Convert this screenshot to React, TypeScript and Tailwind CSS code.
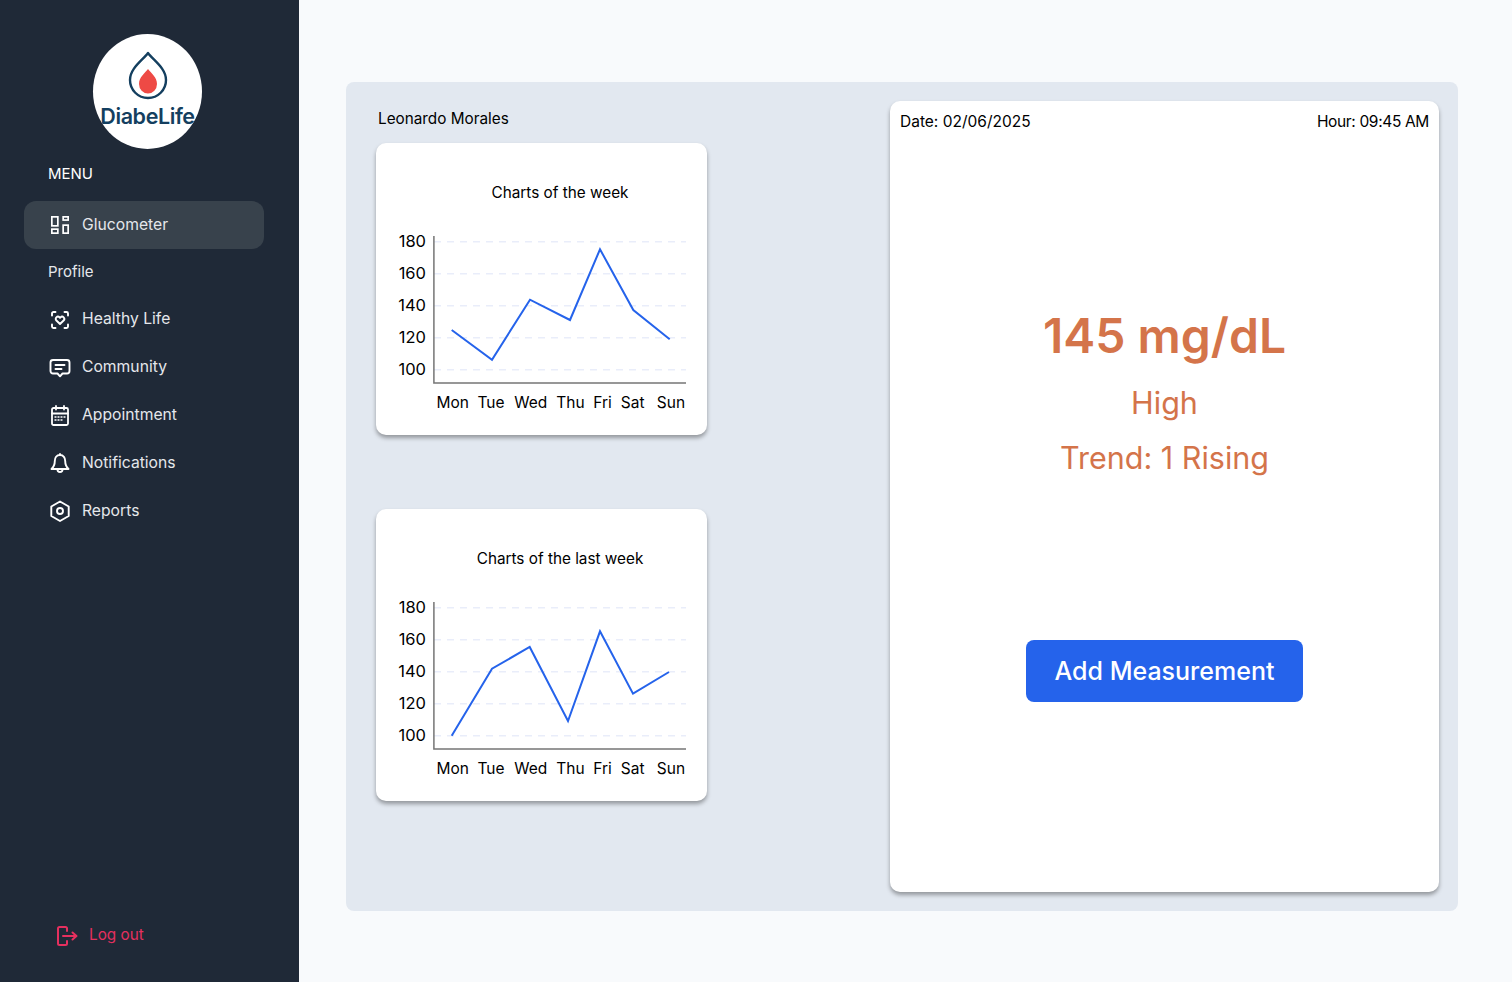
import { ReactNode } from 'react';

const FONT = "font-['Inter','Noto_Sans',sans-serif]";
const DAYS: [string, number][] = [['Mon', 76.7], ['Tue', 115], ['Wed', 154.7], ['Thu', 194.5], ['Fri', 226.6], ['Sat', 256.7], ['Sun', 295]];
const LEVELS: [string, number][] = [['180', 18.7], ['160', 50.7], ['140', 82.7], ['120', 114.7], ['100', 146.7]];

const icon = 'h-[22px] w-[22px] shrink-0';

function GridIcon() {
  return (
    <svg viewBox="0 0 22 22" className={icon} fill="none" stroke="white" strokeWidth="1.700">
      <rect x="2.850" y="2.850" width="6" height="9" />
      <rect x="14.150" y="2.850" width="5" height="3.200" />
      <rect x="2.850" y="15.150" width="6" height="4" />
      <rect x="14.150" y="11.150" width="5" height="8" />
    </svg>
  );
}

function ScanHeartIcon() {
  return (
    <svg viewBox="0 -1 22 22" className={icon} fill="none" stroke="white" strokeWidth="1.900" strokeLinecap="round" strokeLinejoin="round">
      <path d="M3 6.500V4.500a1.500 1.500 0 0 1 1.500-1.500H6.500M15.500 3h2a1.500 1.500 0 0 1 1.500 1.500v2M19 15.500v2a1.500 1.500 0 0 1-1.500 1.500h-2M6.500 19h-2A1.500 1.500 0 0 1 3 17.500v-2" />
      <path d="M11 15l-3.600-3.500a2.200 2.200 0 0 1 3.100-3.200l.5.5.5-.5a2.200 2.200 0 0 1 3.100 3.200z" />
    </svg>
  );
}

function ChatIcon() {
  return (
    <svg viewBox="0 0 22 22" className={icon} fill="none" stroke="white" strokeWidth="1.900" strokeLinecap="round" strokeLinejoin="round">
      <path d="M4 4h14a2.500 2.500 0 0 1 2.500 2.500V15a2.500 2.500 0 0 1-2.500 2.500h-4.500L11 20.300 8.500 17.500H4A2.500 2.500 0 0 1 1.500 15V6.500A2.500 2.500 0 0 1 4 4z" />
      <path d="M6.500 9h9M6.500 13h6" />
    </svg>
  );
}

function CalendarIcon() {
  return (
    <svg viewBox="0 0 22 22" className={icon} fill="none" stroke="white" strokeWidth="1.800" strokeLinecap="round" strokeLinejoin="round">
      <rect x="3" y="4" width="16" height="17" rx="1.500" />
      <path d="M7 2v3.500M15 2v3.500M3 9.500h16" />
      <path d="M5.500 13h2M8.500 13h2M11.500 13h2M14.500 13h2M5.500 16h2M8.500 16h2M11.500 16h2" strokeWidth="1.600" strokeLinecap="butt" />
    </svg>
  );
}

function BellIcon() {
  return (
    <svg viewBox="0 0 22 22" className={icon} fill="none" stroke="white" strokeWidth="1.900" strokeLinecap="round" strokeLinejoin="round">
      <path d="M11 3C7.500 3 5.800 5.800 5.800 9c0 4-1.500 6.300-3.300 8h17c-1.800-1.700-3.300-4-3.300-8 0-3.200-1.700-6-5.200-6z" />
      <path d="M8.500 17.500a2.500 2.500 0 0 0 5 0M11 2v1" />
    </svg>
  );
}

function HexIcon() {
  return (
    <svg viewBox="0 0 22 22" className={icon} fill="none" stroke="white" strokeWidth="1.900" strokeLinejoin="round">
      <path d="M11 1.500l8.700 5v9.500L11 21l-8.700-5V6.500z" />
      <circle cx="11" cy="11" r="3" />
    </svg>
  );
}

function Logo() {
  return (
    <div className="mx-auto flex h-[115px] w-[109px] flex-col items-center overflow-hidden rounded-[50%] bg-white">
      <svg viewBox="0 0 40 50" className="mt-[17px] h-[50px] w-[40px]" fill="none">
        <path d="M20 2C15 9 2 17 2 29a18 18 0 0 0 36 0C38 17 25 9 20 2z" stroke="#143f5f" strokeWidth="2.400" strokeLinejoin="round" />
        <path d="M20 18c-3 4-9 8-9 15a9 9.500 0 0 0 18 0c0-7-6-11-9-15z" fill="#ee4a45" />
      </svg>
      <span className="mt-[2px] text-[21.500px] leading-[26px] font-semibold tracking-[-0.4px] whitespace-nowrap text-[#143f5f]">DiabeLife</span>
    </div>
  );
}

function NavItem({ label, children, active }: { label: string; children: ReactNode; active?: boolean }) {
  return (
    <div className={`flex h-12 items-center gap-[11px] rounded-xl px-[25px] text-[15.700px] text-gray-200 ${active ? 'bg-[#38424c]' : ''}`}>
      {children}
      <span>{label}</span>
    </div>
  );
}

function ChartCard({ title, points, className }: { title: string; points: string; className?: string }) {
  return (
    <div className={`h-[292px] w-[331px] rounded-[10px] bg-white pt-[38px] shadow-[0_3px_4px_rgba(0,0,0,0.35)] ${className ?? ''}`}>
      <div className="pl-[37px] text-center text-[15.300px] leading-6 text-black">{title}</div>
      <svg viewBox="0 0 331 212" className="mt-[18px] h-[212px] w-[331px]" fontSize="15.500" fill="black">
        {LEVELS.map(([label, y]) => (
          <g key={label}>
            <line x1="58" x2="310" y1={y} y2={y} stroke="#e9edfa" strokeWidth="1.400" strokeDasharray="7 6" />
            <text x="50" y={y + 5.500} textAnchor="end" fontSize="16.500">{label}</text>
          </g>
        ))}
        <path d="M57.900 13V160H310" fill="none" stroke="#757575" strokeWidth="1.500" />
        <polyline points={points} fill="none" stroke="#2563eb" strokeWidth="2" />
        {DAYS.map(([label, x]) => (
          <text key={label} x={x} y="185" textAnchor="middle">{label}</text>
        ))}
      </svg>
    </div>
  );
}

export default function App() {
  return (
    <div className={`flex h-[982px] w-[1512px] overflow-hidden bg-[#f8fafc] ${FONT}`}>
      <aside className="flex h-full w-[299px] shrink-0 flex-col bg-[#1f2937] pt-[34px] pb-[35px]">
        <div className="pr-[5px] pl-[1px]"><Logo /></div>
        <nav className="flex flex-col pr-[35px] pl-6">
          <div className="mb-1 flex h-12 items-center px-6 pt-[2px] text-[15px] text-white">MENU</div>
          <NavItem label="Glucometer" active><GridIcon /></NavItem>
          <div className="flex h-[46px] items-center px-6 text-[15px] text-gray-200">Profile</div>
          <NavItem label="Healthy Life"><ScanHeartIcon /></NavItem>
          <NavItem label="Community"><ChatIcon /></NavItem>
          <NavItem label="Appointment"><CalendarIcon /></NavItem>
          <NavItem label="Notifications"><BellIcon /></NavItem>
          <NavItem label="Reports"><HexIcon /></NavItem>
        </nav>
        <div className="mt-auto flex items-center gap-[11px] pl-[56px] text-[15.300px] text-[#e5305f]">
          <svg viewBox="0 0 22 22" className="h-[22px] w-[22px]" fill="none" stroke="#e5305f" strokeWidth="2" strokeLinecap="round" strokeLinejoin="round">
            <path d="M11 6V3.500a1.500 1.500 0 0 0-1.500-1.500H3.500A1.500 1.500 0 0 0 2 3.500v15A1.500 1.500 0 0 0 3.500 20h6a1.500 1.500 0 0 0 1.500-1.500V16" />
            <path d="M7 11h13M16.500 7.500L20.500 11l-4 3.500" />
          </svg>
          <span>Log out</span>
        </div>
      </aside>
      <main className="flex-1 pt-[82px] pr-[54px] pl-[47px]">
        <section className="flex h-[829px] justify-between rounded-lg bg-[#e2e8f0] pt-[19px] pr-[19px] pl-[30px]">
          <div>
            <div className="mt-[6px] pl-[2px] text-[15.300px] leading-6 text-black">Leonardo Morales</div>
            <ChartCard className="mt-[12px]" title="Charts of the week" points="75.700,107 116,136.700 154,76.700 194,97 224,26.300 257.300,87 293.700,116.300" />
            <ChartCard className="mt-[74px]" title="Charts of the last week" points="75.700,146.700 116,79.700 153.700,58 192,132 224,42.300 257,104.700 293,83" />
          </div>
          <div className="flex h-[791px] w-[549px] flex-col items-center rounded-[10px] bg-white pt-[9px] shadow-[0_3px_4px_rgba(0,0,0,0.35)]">
            <div className="flex w-full justify-between px-[10px] text-[15.500px] leading-6 text-black">
              <span>Date: 02/06/2025</span>
              <span className="tracking-[-0.35px]">Hour: 09:45 AM</span>
            </div>
            <div className="mt-[170px] text-[48px] leading-[64px] font-semibold text-[#d4744a]">145 mg/dL</div>
            <div className="mt-[15px] text-[30.500px] leading-10 text-[#d4744a]">High</div>
            <div className="mt-[15px] text-[30.500px] leading-10 text-[#d4744a]">Trend: 1 Rising</div>
            <button className="mt-[162px] h-[62px] w-[277px] rounded-lg bg-[#2563eb] pt-[2px] text-[25px] font-medium text-white">Add Measurement</button>
          </div>
        </section>
      </main>
    </div>
  );
}
